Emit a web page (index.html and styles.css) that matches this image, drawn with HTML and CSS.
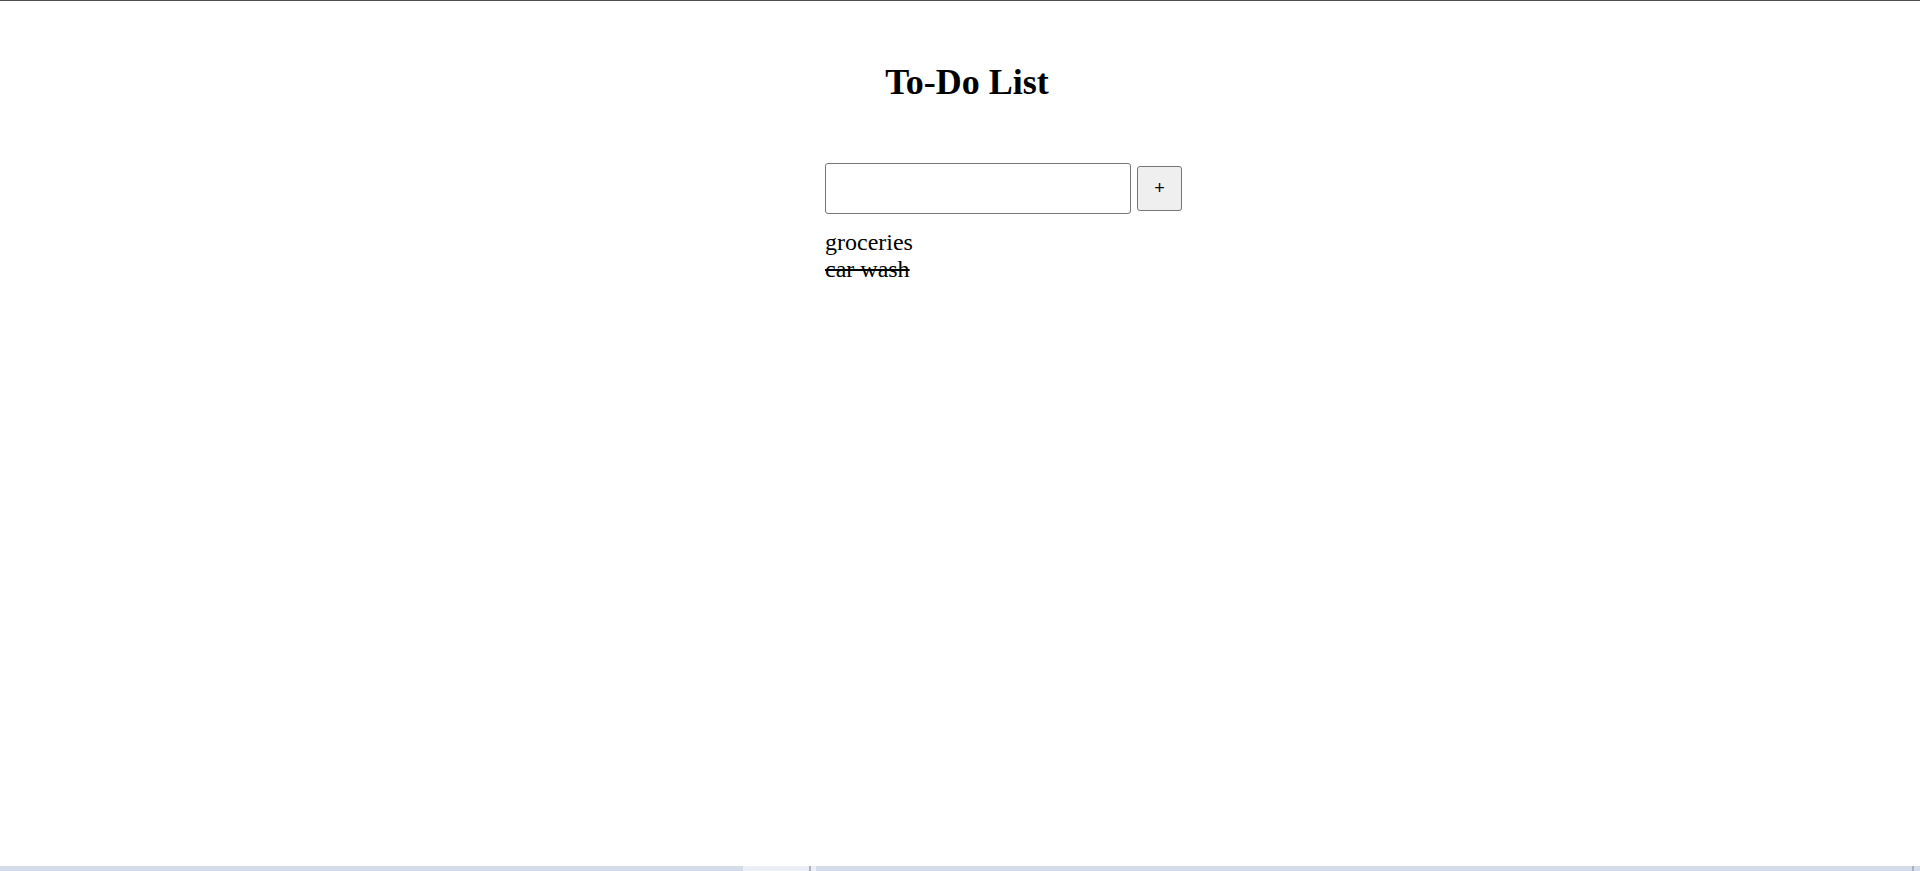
FILE: index.html
```html
<!DOCTYPE html>
<html>
<head>
<meta charset="utf-8">
<title>To-Do List</title>
<link rel="stylesheet" href="styles.css">
</head>
<body>
<div class="app">
  <h1 class="title">To-Do List</h1>
  <form class="add-form">
    <input class="task-input" type="text">
    <button class="add-btn" type="button">+</button>
  </form>
  <ul class="tasks">
    <li class="task">groceries</li>
    <li class="task done">car wash</li>
  </ul>
</div>
<div class="bottom-bar">
  <span class="seg seg-a"></span>
  <span class="seg seg-light1"></span>
  <span class="seg seg-line"></span>
  <span class="seg seg-light2"></span>
  <span class="seg seg-b"></span>
  <span class="seg seg-line"></span>
  <span class="seg seg-c"></span>
</div>
</body>
</html>
```

FILE: styles.css
```css
html, body {
  margin: 0;
  padding: 0;
  background: #ffffff;
}
body {
  border-top: 1px solid #4d4d4d;
  height: 870px;
  overflow: hidden;
  font-family: "Liberation Serif", "Times New Roman", serif;
  color: #000;
}
.app {
  width: 284px;
  margin-left: calc(50% - 135px);
  padding-top: 61px;
}
.title {
  margin: 0;
  font-size: 36px;
  line-height: 40px;
  font-weight: bold;
  text-align: center;
}
.add-form {
  display: flex;
  align-items: center;
  gap: 6px;
  margin-top: 61px;
  white-space: nowrap;
}
.task-input {
  box-sizing: border-box;
  flex: none;
  width: 306px;
  height: 51px;
  margin: 0;
  border: 1px solid #767676;
  border-radius: 3px;
  background: #fff;
  padding: 2px 6px;
  font-size: 16px;
}
.add-btn {
  box-sizing: border-box;
  flex: none;
  width: 45px;
  height: 45px;
  margin: 0;
  padding: 0;
  border: 1px solid #767676;
  border-radius: 3px;
  background: #efefef;
  color: #000;
  font-family: "Liberation Sans", Arial, sans-serif;
  font-size: 18px;
}
.tasks {
  list-style: none;
  margin: 15px 0 0;
  padding: 0;
  font-size: 24px;
  line-height: 27px;
}
.task {
  margin: 0;
}
.done {
  text-decoration: line-through;
}
.bottom-bar {
  position: fixed;
  left: 0;
  right: 0;
  bottom: 0;
  height: 5px;
  display: flex;
}
.seg { display: block; height: 100%; }
.seg-a { width: 743px; background: #d4dcea; }
.seg-light1 { width: 66px; background: #eceff6; }
.seg-line { width: 2px; background: #aab1bf; }
.seg-light2 { width: 5px; background: #eceff6; }
.seg-b { flex: 1; background: #d4dcea; }
.seg-c { width: 6px; background: #d4dcea; }
```
